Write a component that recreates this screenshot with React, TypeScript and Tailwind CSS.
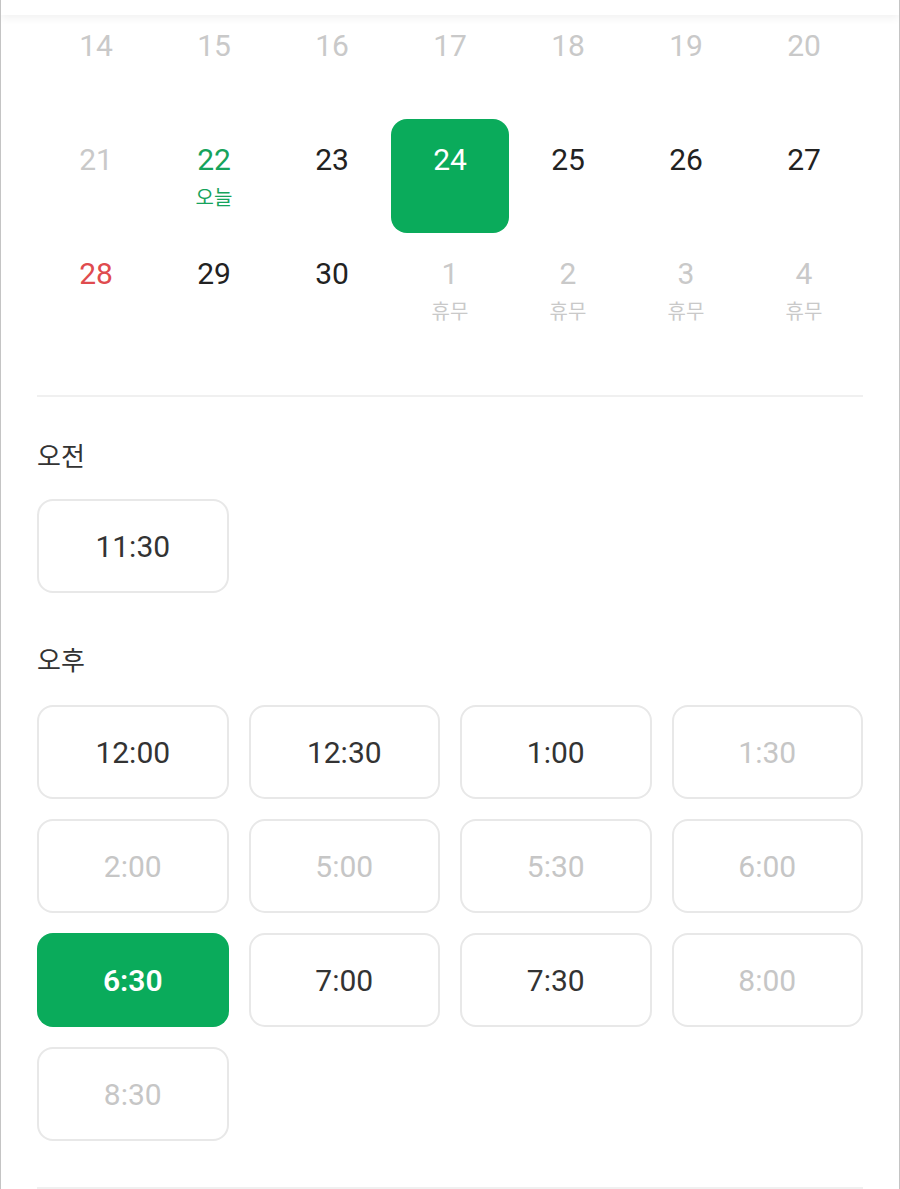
import React from 'react';

type Day = {
  n: number;
  tone: 'muted' | 'today' | 'normal' | 'sunday' | 'selected';
  sub?: string;
};

const weeks: Day[][] = [
  [14, 15, 16, 17, 18, 19, 20].map((n) => ({ n, tone: 'muted' as const })),
  [
    { n: 21, tone: 'muted' },
    { n: 22, tone: 'today', sub: '오늘' },
    { n: 23, tone: 'normal' },
    { n: 24, tone: 'selected' },
    { n: 25, tone: 'normal' },
    { n: 26, tone: 'normal' },
    { n: 27, tone: 'normal' },
  ],
  [
    { n: 28, tone: 'sunday' },
    { n: 29, tone: 'normal' },
    { n: 30, tone: 'normal' },
    { n: 1, tone: 'muted', sub: '휴무' },
    { n: 2, tone: 'muted', sub: '휴무' },
    { n: 3, tone: 'muted', sub: '휴무' },
    { n: 4, tone: 'muted', sub: '휴무' },
  ],
];

type Slot = { t: string; state: 'open' | 'off' | 'picked' };

const morning: Slot[] = [{ t: '11:30', state: 'open' }];

const afternoon: Slot[] = [
  { t: '12:00', state: 'open' },
  { t: '12:30', state: 'open' },
  { t: '1:00', state: 'open' },
  { t: '1:30', state: 'off' },
  { t: '2:00', state: 'off' },
  { t: '5:00', state: 'off' },
  { t: '5:30', state: 'off' },
  { t: '6:00', state: 'off' },
  { t: '6:30', state: 'picked' },
  { t: '7:00', state: 'open' },
  { t: '7:30', state: 'open' },
  { t: '8:00', state: 'off' },
  { t: '8:30', state: 'off' },
];

const toneClass: Record<Day['tone'], string> = {
  muted: 'text-[#c9c9c9]',
  today: 'text-[#16a35c]',
  normal: 'text-[#222222]',
  sunday: 'text-[#df4b4f]',
  selected: 'text-white',
};

function DayCell({ day }: { day: Day }) {
  const isSelected = day.tone === 'selected';
  return (
    <div
      className={`h-[114px] flex flex-col items-center pt-[23px] ${
        isSelected ? 'bg-[#0aab5b] rounded-[16px]' : ''
      }`}
    >
      <span className={`text-[30px] leading-[36px] ${toneClass[day.tone]}`}>{day.n}</span>
      {day.sub && (
        <span className={`mt-[8px] text-[20px] leading-[24px] ${toneClass[day.tone]}`}>{day.sub}</span>
      )}
    </div>
  );
}

function SlotButton({ slot }: { slot: Slot }) {
  if (slot.state === 'picked') {
    return (
      <div className="h-[94px] rounded-[16px] bg-[#0aab5b] flex items-center justify-center text-white text-[30px] font-semibold">
        {slot.t}
      </div>
    );
  }
  return (
    <div
      className={`h-[94px] rounded-[16px] border-2 border-[#e8e8e8] bg-white flex items-center justify-center text-[30px] ${
        slot.state === 'off' ? 'text-[#c6c6c6]' : 'text-[#333333]'
      }`}
    >
      {slot.t}
    </div>
  );
}

export default function App() {
  return (
    <div
      className="relative w-[900px] min-h-[1189px] bg-white border-x border-[#c4c4c4] overflow-hidden"
      style={{ fontFamily: 'Roboto, "Noto Sans CJK KR", sans-serif' }}
    >
      {/* sticky header edge */}
      <div className="absolute top-0 left-0 right-0 h-[15px] bg-white shadow-[0_3px_8px_rgba(0,0,0,0.06)] z-10" />

      <div className="px-[36px] pt-[5px]">
        {/* Calendar */}
        <div className="grid grid-cols-7">
          {weeks.flat().map((d, i) => (
            <DayCell key={i} day={d} />
          ))}
        </div>

        <div className="mt-[48px] h-[2px] bg-[#f0f0f0]" />

        {/* Morning */}
        <div className="mt-[44px] text-[26px] leading-[32px] text-[#333333]">오전</div>
        <div className="mt-[26px] grid grid-cols-4 gap-[20px]">
          {morning.map((s) => (
            <SlotButton key={s.t} slot={s} />
          ))}
        </div>

        {/* Afternoon */}
        <div className="mt-[52px] text-[26px] leading-[32px] text-[#333333]">오후</div>
        <div className="mt-[28px] grid grid-cols-4 gap-x-[20px] gap-y-[20px]">
          {afternoon.map((s) => (
            <SlotButton key={s.t} slot={s} />
          ))}
        </div>

        <div className="mt-[46px] h-[2px] bg-[#f0f0f0]" />
      </div>
    </div>
  );
}
